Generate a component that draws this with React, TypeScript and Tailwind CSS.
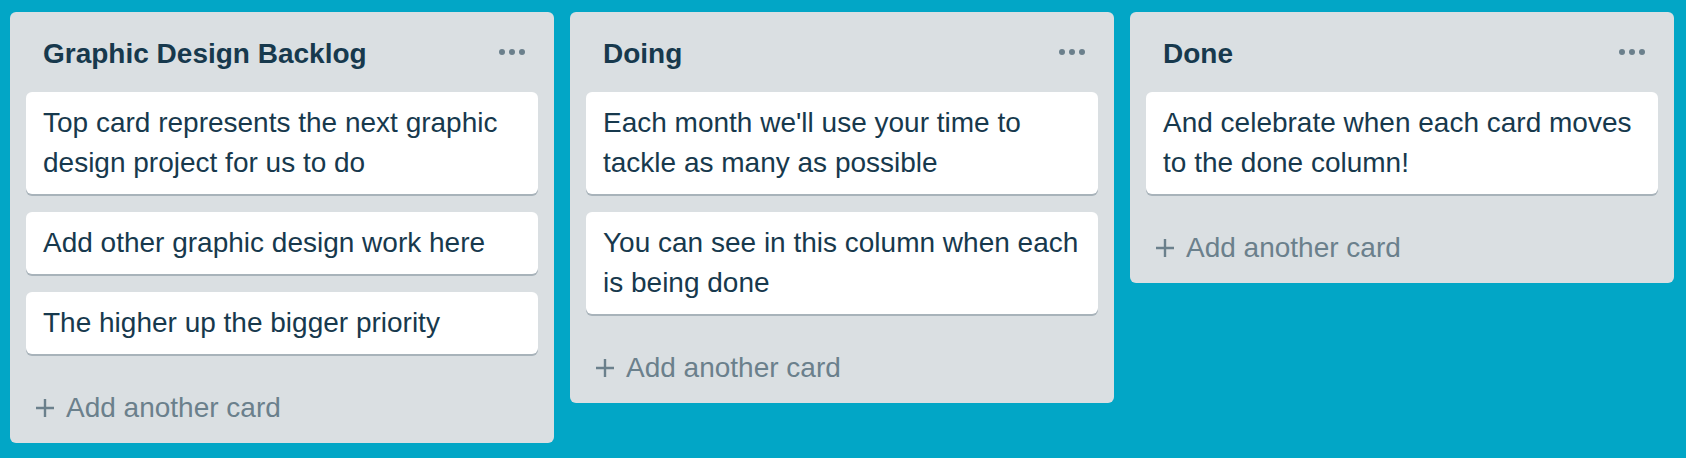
import React from "react";

type List = { title: string; cards: string[] };

const lists: List[] = [
  {
    title: "Graphic Design Backlog",
    cards: [
      "Top card represents the next graphic design project for us to do",
      "Add other graphic design work here",
      "The higher up the bigger priority",
    ],
  },
  {
    title: "Doing",
    cards: [
      "Each month we'll use your time to tackle as many as possible",
      "You can see in this column when each is being done",
    ],
  },
  {
    title: "Done",
    cards: ["And celebrate when each card moves to the done column!"],
  },
];

function Dots() {
  return (
    <svg width="28" height="8" viewBox="0 0 28 8" className="block">
      <circle cx="3" cy="4" r="3" fill="#6b808c" />
      <circle cx="13" cy="4" r="3" fill="#6b808c" />
      <circle cx="23" cy="4" r="3" fill="#6b808c" />
    </svg>
  );
}

function Plus() {
  return (
    <svg width="20" height="20" viewBox="0 0 20 20" className="block">
      <path d="M10 1v18M1 10h18" stroke="#6b808c" strokeWidth="2.4" />
    </svg>
  );
}

export default function App() {
  return (
    <div
      className="w-[1686px] h-[458px] bg-[#02a6c6] flex items-start gap-4 pl-[10px] pt-3 overflow-hidden"
      style={{ fontFamily: '"Liberation Sans", Arial, sans-serif' }}
    >
      {lists.map((l) => (
        <div key={l.title} className="w-[544px] shrink-0 bg-[#dadfe2] rounded-[6px] flex flex-col">
          <div className="flex items-center justify-between pl-[33px] pr-[27px] pt-5 pb-5">
            <div className="text-[28px] leading-[40px] font-bold text-[#17394d] translate-y-[2px]">{l.title}</div>
            <Dots />
          </div>
          <div className="flex flex-col gap-[18px] px-4">
            {l.cards.map((c) => (
              <div
                key={c}
                className="bg-white rounded-[6px] shadow-[0_2px_0_#a8b3ba] pl-[17px] pr-[14px] py-[11px] text-[28px] leading-[40px] text-[#17394d]"
              >
                {c}
              </div>
            ))}
          </div>
          <div className="mt-[34px] mb-[15px] pl-[25px] flex items-center gap-[11px] h-[40px] text-[28px] leading-[40px] text-[#6b808c]">
            <Plus />
            <span>Add another card</span>
          </div>
        </div>
      ))}
    </div>
  );
}
